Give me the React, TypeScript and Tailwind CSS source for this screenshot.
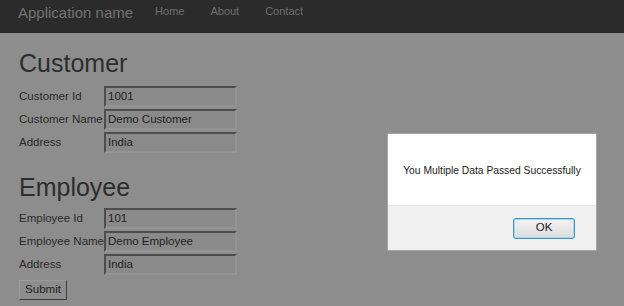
import React from "react";

const font = { fontFamily: '"Liberation Sans", Arial, sans-serif' };

function Field({ label, value }: { label: string; value: string }) {
    return (
        <div className="flex items-center h-[23px]">
            <span className="w-[85px] text-[11.5px] text-[#2a2a2a] whitespace-nowrap">{label}</span>
            <div className="w-[133px] h-[21px] flex items-center pl-[2px] bg-[#8a8a8a] border-2 border-t-[#4d4d4d] border-l-[#4d4d4d] border-r-[#949494] border-b-[#949494] text-[11.5px] text-[#1e1e1e]">
                {value}
            </div>
        </div>
    );
}

export default function App() {
    return (
        <div className="relative w-[624px] h-[306px] overflow-hidden bg-[#8d8d8d]" style={font}>

            {/* Navbar */}
            <div className="h-[33px] bg-[#2b2b2b] flex items-center pl-[18px]">
                <span className="text-[15px] text-[#737373] mr-[22px] -mt-[7px]">Application name</span>
                <div className="flex gap-[26px] text-[11px] text-[#707070] -mt-[10px]">
                    <span>Home</span>
                    <span>About</span>
                    <span>Contact</span>
                </div>
            </div>

            {/* Forms */}
            <div className="pl-[19px] pt-[15px]">
                <h2 className="text-[25px] leading-[30px] text-[#2d2d2d] mb-[7px]">Customer</h2>
                <Field label="Customer Id" value="1001" />
                <Field label="Customer Name" value="Demo Customer" />
                <Field label="Address" value="India" />

                <h2 className="text-[25px] leading-[30px] text-[#2d2d2d] mt-[18px] mb-[5px]">Employee</h2>
                <Field label="Employee Id" value="101" />
                <Field label="Employee Name" value="Demo Employee" />
                <Field label="Address" value="India" />
                <button className="-mt-[1px] w-[48px] h-[20px] text-[11.5px] text-[#1e1e1e] bg-[#8d8d8d] border border-t-[#9a9a9a] border-l-[#9a9a9a] border-r-[#3e3e3e] border-b-[#3e3e3e]">
                    Submit
                </button>
            </div>

            {/* Alert dialog */}
            <div className="absolute left-[387px] top-[133px] w-[210px] h-[118px] bg-white border border-[#a5a5a5] flex flex-col">
                <div className="h-[71px] flex items-center justify-center text-[10.3px] text-[#1a1a1a] pt-[2px]">
                    You Multiple Data Passed Successfully
                </div>
                <div className="flex-1 bg-[#f0f0f0] border-t border-[#e6e6e6] flex items-center justify-end pr-[21px]">
                    <button className="w-[62px] h-[21px] text-[11.5px] text-[#1a1a1a] rounded-[3px] border border-[#3c93c6] bg-gradient-to-b from-[#f4f4f4] to-[#dcdcdc] shadow-[inset_0_0_0_1px_#a9d6f0]">
                        OK
                    </button>
                </div>
            </div>
        </div>
    );
}
